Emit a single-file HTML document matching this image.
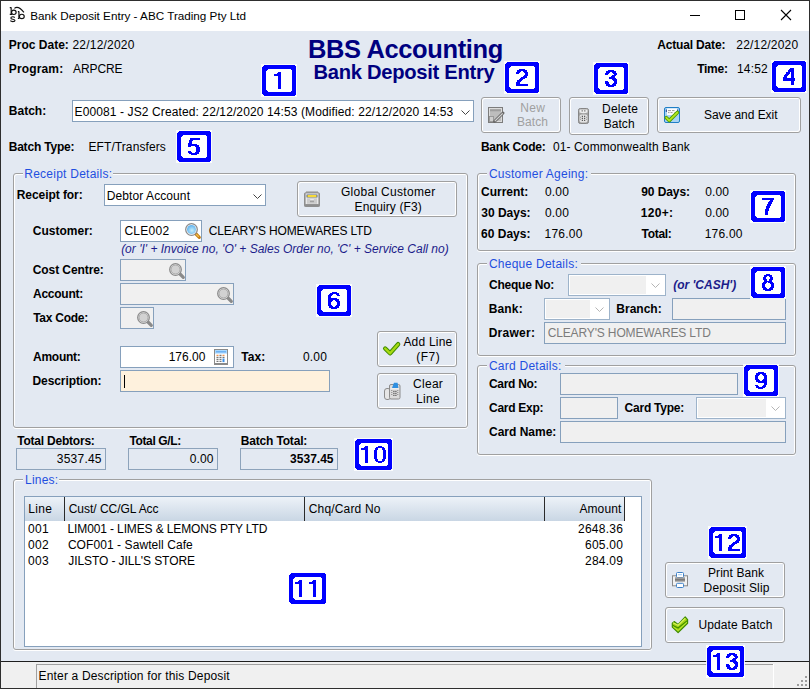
<!DOCTYPE html>
<html><head><meta charset="utf-8">
<style>
*{box-sizing:border-box}
html,body{margin:0;padding:0;width:810px;height:689px;overflow:hidden}
body{position:relative;background:#E3E9F2;font-family:"Liberation Sans",sans-serif;font-size:12px;color:#000}
.a{position:absolute}
.t{position:absolute;white-space:nowrap;line-height:14px;font-size:12px}
.grp{position:absolute;border:1px solid #A0A0A0;border-radius:3px;box-shadow:inset 1px 1px 0 #fff,inset -1px 0 0 #fff,0 1px 0 #fff}
.leg{position:absolute;height:14px;background:#E3E9F2}
.inp{position:absolute;border:1px solid #86A0BC;background:#fff}
.dis{background:#F0F0F0}
.tot{position:absolute;border:1px solid #8DA3BB;background:#E3E9F2}
.btn{position:absolute;border:1px solid #A0A0A0;border-radius:3px;background:#E3E9F2;box-shadow:inset 1px 1px 0 #fff,inset -1px -1px 0 #fff}
.badge{position:absolute;width:34px;height:31px;border:4px solid #0000FF;background:#fff;border-radius:3px;color:#0000FF;font-size:24px;line-height:23px;text-align:center;box-shadow:0 0 0 1px #fff}
.w2{width:37px}
svg{position:absolute;overflow:visible}
</style></head><body>
<div class="a" style="left:0px;top:0px;width:810px;height:31px;background:#fff;"></div>
<div class="t" style="top:9px;left:30.34px;font-size:11.7px;">Bank Deposit Entry - ABC Trading Pty Ltd</div>
<svg style="left:6px;top:4px" width="24" height="22" viewBox="0 0 752 689">
<g fill="none" stroke="#111" stroke-width="36">
<path d="M162 110V330M118 112H170M118 325H200"/>
<ellipse cx="245" cy="262" rx="72" ry="68"/>
<path d="M405 235V458M372 240H412M372 455H420"/>
<ellipse cx="495" cy="388" rx="76" ry="68"/>
<path d="M272 425Q255 398 212 398Q152 398 152 438Q152 470 215 478Q282 486 282 520Q282 552 215 552Q160 552 135 522"/>
</g>
<path d="M262 135Q390 40 562 262" fill="none" stroke="#111" stroke-width="34"/>
</svg>
<div class="a" style="left:690px;top:15px;width:10px;height:1px;background:#000;"></div>
<div class="a" style="left:735px;top:10px;width:10px;height:10px;border:1px solid #000"></div>
<svg style="left:781px;top:10px" width="10" height="10" viewBox="0 0 10 10"><path d="M0 0L10 10M10 0L0 10" stroke="#000" stroke-width="1.1"/></svg>
<div class="t" style="top:38px;left:8.80px;font-weight:bold;">Proc Date:</div>
<div class="t" style="top:38px;left:72.50px;letter-spacing:0.194px;">22/12/2020</div>
<div class="t" style="top:62px;left:8.80px;font-weight:bold;letter-spacing:0.150px;">Program:</div>
<div class="t" style="top:62px;left:73.08px;letter-spacing:-0.100px;">ARPCRE</div>
<div class="t" style="left:308px;top:35px;font-weight:bold;font-size:25.5px;line-height:28px;letter-spacing:-0.385px;color:#000080">BBS Accounting</div>
<div class="t" style="left:313.6px;top:61px;font-weight:bold;font-size:20.2px;line-height:22px;letter-spacing:-0.3px;color:#000080">Bank Deposit Entry</div>
<div class="t" style="top:38px;left:657.20px;font-weight:bold;letter-spacing:-0.160px;">Actual Date:</div>
<div class="t" style="top:38px;left:736.30px;letter-spacing:0.194px;">22/12/2020</div>
<div class="t" style="top:62px;left:697.17px;font-weight:bold;letter-spacing:-0.250px;">Time:</div>
<div class="t" style="top:62px;left:736.99px;letter-spacing:0.194px;">14:52</div>
<div class="t" style="top:104px;left:8.80px;font-weight:bold;">Batch:</div>
<div class="inp" style="left:72px;top:100px;width:402px;height:22px;overflow:hidden"></div>
<div class="a" style="left:73px;top:101px;width:380px;height:20px;overflow:hidden">
<div class="t" style="top:4px;left:1.52px;letter-spacing:0.110px;">E00081 - JS2 Created: 22/12/2020 14:53 (Modified: 22/12/2020 14:53)</div>
</div>
<svg style="left:461px;top:110px" width="9" height="6" viewBox="0 0 9 6"><path d="M0.5 0.5L4.5 4.5L8.5 0.5" fill="none" stroke="#444" stroke-width="1"/></svg>
<div class="btn" style="left:481px;top:97px;width:80px;height:36px;"></div>
<svg style="left:488px;top:107px" width="16" height="16" viewBox="0 0 16 16">
<rect x="0.5" y="0.5" width="14" height="15" fill="#BDBDBD" stroke="#7C7C7C"/>
<rect x="1.5" y="1.5" width="12" height="13" fill="none" stroke="#DCDCDC"/>
<rect x="2" y="2.3" width="11" height="2" fill="#9E9E9E"/>
<rect x="1.5" y="9.5" width="4" height="5" fill="#CFCFCF" stroke="#8E8E8E" stroke-width="0.8"/>
<path d="M6.5 14.5L15 6" stroke="#6A6A6A" stroke-width="3" stroke-linecap="round"/>
<path d="M6.8 14.2L14.7 6.3" stroke="#D6D6D6" stroke-width="1.2"/></svg>
<div class="t" style="top:101px;left:432.70px;width:200px;text-align:center;letter-spacing:0.331px;color:#A0A0A0;">New</div>
<div class="t" style="top:115px;left:432.50px;width:200px;text-align:center;letter-spacing:0.063px;color:#A0A0A0;">Batch</div>
<div class="btn" style="left:569px;top:97px;width:80px;height:38px;"></div>
<svg style="left:578px;top:108px" width="11" height="16" viewBox="0 0 11 16">
<rect x="0.5" y="0.5" width="10" height="15" rx="1.8" fill="#A0A0A0" stroke="#868686"/>
<path d="M1.5 1.5H9.5V4.5Q5.5 6 1.5 4.5Z" fill="#EDEDED"/>
<rect x="1.5" y="6.5" width="8" height="8" rx="2" fill="#E2E2E2"/>
<path d="M3.6 2.9h1.2M6.2 2.9h1.2" stroke="#6A6A6A" stroke-width="1.2"/>
<path d="M3.8 8.3h1.2M6 8.3h1.2M3.8 10.3h1.2M6 10.3h1.2M3.8 12.3h1.2M6 12.3h1.2" stroke="#5A5A5A" stroke-width="1.3"/>
<path d="M2 9.3h1M8 9.3h1M2 11.3h1M8 11.3h1" stroke="#9A9A9A" stroke-width="1"/></svg>
<div class="t" style="top:102px;left:520.10px;width:200px;text-align:center;letter-spacing:0.219px;">Delete</div>
<div class="t" style="top:117px;left:519.20px;width:200px;text-align:center;letter-spacing:0.063px;">Batch</div>
<div class="btn" style="left:657px;top:97px;width:144px;height:36px;"></div>
<svg style="left:664px;top:107px" width="16" height="16" viewBox="0 0 16 16">
<rect x="0.5" y="0.5" width="15" height="15" rx="1.5" fill="#A6D3F5" stroke="#1F7EC6"/>
<rect x="3" y="1.5" width="10" height="6.5" fill="#FDFDFD"/>
<path d="M2.3 2.5v2.5M13.7 2.5v2.5" stroke="#1A3F8A" stroke-width="1"/>
<path d="M4 3.6h3M8 3.6h2.5M4 5.6h1.5M6.5 5.6h2M10.5 5.6h1" stroke="#8A8A8A" stroke-width="0.9"/>
<path d="M2.3 10.7L5.2 13.6L13.4 5.5" fill="none" stroke="#4C9A00" stroke-width="3.6" stroke-linecap="round" stroke-linejoin="round"/>
<path d="M2.3 10.7L5.2 13.6L13.4 5.5" fill="none" stroke="#B4E61E" stroke-width="1.8" stroke-linecap="round" stroke-linejoin="round"/></svg>
<div class="t" style="top:108px;left:704.06px;letter-spacing:-0.050px;">Save and Exit</div>
<div class="t" style="top:140px;left:8.66px;font-weight:bold;letter-spacing:-0.190px;">Batch Type:</div>
<div class="t" style="top:140px;left:88.52px;letter-spacing:0.080px;">EFT/Transfers</div>
<div class="t" style="top:140px;left:480.90px;font-weight:bold;letter-spacing:-0.190px;">Bank Code:</div>
<div class="t" style="top:140px;left:553.03px;letter-spacing:0.100px;">01- Commonwealth Bank</div>
<div class="grp" style="left:13px;top:173px;width:455px;height:255px;"></div>
<div class="a" style="left:23px;top:170px;width:90px;height:8px;background:#E3E9F2;"></div>
<div class="t" style="top:167px;left:24.22px;letter-spacing:0.250px;color:#1F4FE0;">Receipt Details:</div>
<div class="t" style="top:188px;left:16.70px;font-weight:bold;letter-spacing:-0.060px;">Receipt for:</div>
<div class="inp" style="left:104px;top:184px;width:162px;height:22px;"></div>
<div class="t" style="top:189px;left:106.72px;letter-spacing:0.092px;">Debtor Account</div>
<svg style="left:253px;top:194px" width="9" height="6" viewBox="0 0 9 6"><path d="M0.5 0.5L4.5 4.5L8.5 0.5" fill="none" stroke="#444" stroke-width="1"/></svg>
<div class="btn" style="left:297px;top:181px;width:160px;height:36px;"></div>
<svg style="left:304px;top:191px" width="16" height="16" viewBox="0 0 16 16">
<rect x="2" y="0.3" width="12" height="1.6" fill="#A6A6A6"/>
<rect x="0.5" y="1.8" width="15" height="13.7" rx="1" fill="#A8A8A8" stroke="#8E8E8E"/>
<rect x="1.8" y="2.5" width="12.4" height="10.5" fill="#E8E8E8"/>
<rect x="2.6" y="3.6" width="10.8" height="2.8" fill="#3A4E78"/>
<rect x="3.4" y="4" width="9.2" height="2.2" fill="#F6D938"/>
<rect x="3" y="7.3" width="10" height="5.5" fill="#CCCCCC"/>
<rect x="6.2" y="8.3" width="3.6" height="1" fill="#F4F4F4"/>
<rect x="6" y="9.6" width="4" height="1.6" fill="#A2A2A2"/>
<rect x="0.5" y="13.2" width="15" height="2.3" fill="#8E8E8E"/></svg>
<div class="t" style="top:185px;left:288.20px;width:200px;text-align:center;letter-spacing:0.300px;">Global Customer</div>
<div class="t" style="top:200px;left:288.20px;width:200px;text-align:center;letter-spacing:0.100px;">Enquiry (F3)</div>
<div class="t" style="top:224px;left:32.81px;font-weight:bold;">Customer:</div>
<div class="inp" style="left:120px;top:220px;width:82px;height:22px;"></div>
<div class="t" style="top:224px;left:124.39px;letter-spacing:0.272px;">CLE002</div>
<svg style="left:185px;top:223px" width="16" height="16" viewBox="0 0 16 16">
<defs><radialGradient id="lb" cx="0.55" cy="0.6" r="0.6"><stop offset="0" stop-color="#C8F0FC"/><stop offset="1" stop-color="#5EB0EC"/></radialGradient></defs>
<path d="M11 11L14.3 14.3" stroke="#C4801A" stroke-width="3.2" stroke-linecap="round"/>
<path d="M11.6 11.6L13.4 13.4" stroke="#F6C24A" stroke-width="1.3" stroke-linecap="round"/>
<circle cx="6.5" cy="6.5" r="5.8" fill="#fff" stroke="#8C8C8C" stroke-width="1.3"/>
<circle cx="6.5" cy="6.5" r="4.5" fill="url(#lb)"/></svg>
<div class="t" style="top:224px;left:208.79px;letter-spacing:-0.140px;">CLEARY&#x27;S HOMEWARES LTD</div>
<div class="t" style="top:242px;left:121.14px;font-style:italic;color:#1C1C8A;">(or &#x27;I&#x27; + Invoice no, &#x27;O&#x27; + Sales Order no, &#x27;C&#x27; + Service Call no)</div>
<div class="t" style="top:263px;left:32.81px;font-weight:bold;letter-spacing:-0.090px;">Cost Centre:</div>
<div class="inp dis" style="left:120px;top:259px;width:66px;height:22px;"></div>
<svg style="left:169px;top:263px" width="16" height="16" viewBox="0 0 16 16">
<path d="M11 11L14.3 14.3" stroke="#8A8A8A" stroke-width="3.2" stroke-linecap="round"/>
<circle cx="6.5" cy="6.5" r="5.8" fill="#F6F6F6" stroke="#8C8C8C" stroke-width="1.3"/>
<circle cx="6.5" cy="6.5" r="4.5" fill="#D2D2D2" stroke="#9A9A9A" stroke-width="0.8"/></svg>
<div class="t" style="top:287px;left:33.00px;font-weight:bold;letter-spacing:-0.250px;">Account:</div>
<div class="inp dis" style="left:120px;top:283px;width:114px;height:22px;"></div>
<svg style="left:217px;top:287px" width="16" height="16" viewBox="0 0 16 16">
<path d="M11 11L14.3 14.3" stroke="#8A8A8A" stroke-width="3.2" stroke-linecap="round"/>
<circle cx="6.5" cy="6.5" r="5.8" fill="#F6F6F6" stroke="#8C8C8C" stroke-width="1.3"/>
<circle cx="6.5" cy="6.5" r="4.5" fill="#D2D2D2" stroke="#9A9A9A" stroke-width="0.8"/></svg>
<div class="t" style="top:311px;left:33.17px;font-weight:bold;letter-spacing:-0.250px;">Tax Code:</div>
<div class="inp dis" style="left:120px;top:307px;width:34px;height:22px;"></div>
<svg style="left:137px;top:311px" width="16" height="16" viewBox="0 0 16 16">
<path d="M11 11L14.3 14.3" stroke="#8A8A8A" stroke-width="3.2" stroke-linecap="round"/>
<circle cx="6.5" cy="6.5" r="5.8" fill="#F6F6F6" stroke="#8C8C8C" stroke-width="1.3"/>
<circle cx="6.5" cy="6.5" r="4.5" fill="#D2D2D2" stroke="#9A9A9A" stroke-width="0.8"/></svg>
<div class="t" style="top:350px;left:33.00px;font-weight:bold;letter-spacing:-0.250px;">Amount:</div>
<div class="inp" style="left:120px;top:346px;width:114px;height:22px;"></div>
<div class="t" style="top:350px;right:604.52px;letter-spacing:0.020px;">176.00</div>
<svg style="left:214px;top:349px" width="14" height="16" viewBox="0 0 14 16">
<rect x="0.5" y="0.5" width="13" height="15" fill="#FFFFFF" stroke="#8A8A8A"/>
<rect x="0" y="14" width="14" height="2" fill="#8A8A8A"/>
<rect x="1" y="1" width="12" height="3.6" fill="#A9D8FF"/>
<rect x="2" y="2.2" width="10" height="1.2" fill="#5FA8F0"/>
<path d="M2.5 6.3h2M8.5 6.3h2" stroke="#F07820" stroke-width="1"/>
<path d="M5.5 6.3h2M2.5 8.3h2M5.5 8.3h2M8.5 8.3h2M2.5 10.3h2M5.5 10.3h2M2.5 12.3h2M5.5 12.3h2" stroke="#555" stroke-width="1"/>
<rect x="8.5" y="9.5" width="2" height="3.6" fill="#3C8FE8"/></svg>
<div class="t" style="top:350px;left:241.37px;font-weight:bold;">Tax:</div>
<div class="t" style="top:350px;left:303.03px;letter-spacing:0.161px;">0.00</div>
<div class="t" style="top:374px;left:32.50px;font-weight:bold;letter-spacing:-0.090px;">Description:</div>
<div class="inp" style="left:120px;top:370px;width:210px;height:22px;background:#FEF1DD"></div>
<div class="a" style="left:124px;top:375px;width:1px;height:13px;background:#000;"></div>
<div class="btn" style="left:377px;top:331px;width:80px;height:36px;"></div>
<svg style="left:383px;top:341px" width="18" height="14" viewBox="0 0 18 14">
<path d="M2.2 7.5L7.1 12.3L15.1 3.2" fill="none" stroke="#3F8C00" stroke-width="4.4" stroke-linecap="round" stroke-linejoin="round"/>
<path d="M2.2 7.5L7.1 12.3L15.1 3.2" fill="none" stroke="#A8DA12" stroke-width="2.4" stroke-linecap="round" stroke-linejoin="round"/></svg>
<div class="t" style="top:335px;left:327.90px;width:200px;text-align:center;letter-spacing:0.203px;">Add Line</div>
<div class="t" style="top:350px;left:328.20px;width:200px;text-align:center;letter-spacing:0.500px;">(F7)</div>
<div class="btn" style="left:377px;top:373px;width:80px;height:36px;"></div>
<svg style="left:384px;top:382px" width="17" height="18" viewBox="0 0 17 18">
<rect x="0.5" y="6.5" width="6" height="11" rx="2.5" fill="#E6E6E6" stroke="#8C8C8C"/>
<rect x="5.5" y="2.5" width="10.5" height="14.5" rx="1.5" fill="#DCDCDC" stroke="#8C8C8C"/>
<path d="M8 6L10 0.8H13.6L14.4 6Z" fill="#2F8FE0"/>
<rect x="6.5" y="6.3" width="8.5" height="1" fill="#F4F4F4"/>
<path d="M9.3 9.3h1.2M11.3 9.3h1.2M9.3 11.3h1.2M11.3 11.3h1.2M9.3 13.3h1.2M11.3 13.3h1.2" stroke="#555" stroke-width="1.2"/>
<path d="M7.3 8.5h1M13.3 8.5h1M7.3 10.5h1M13.3 10.5h1M7.3 12.5h1M13.3 12.5h1" stroke="#777" stroke-width="0.9"/></svg>
<div class="t" style="top:377px;left:328.10px;width:200px;text-align:center;letter-spacing:0.265px;">Clear</div>
<div class="t" style="top:392px;left:327.90px;width:200px;text-align:center;letter-spacing:0.328px;">Line</div>
<div class="t" style="top:434px;left:17.17px;font-weight:bold;letter-spacing:-0.210px;">Total Debtors:</div>
<div class="tot" style="left:16px;top:448px;width:90px;height:22px;"></div>
<div class="t" style="top:452px;right:708.23px;letter-spacing:0.232px;">3537.45</div>
<div class="t" style="top:434px;left:129.47px;font-weight:bold;letter-spacing:-0.380px;">Total G/L:</div>
<div class="tot" style="left:128px;top:448px;width:90px;height:22px;"></div>
<div class="t" style="top:452px;right:596.36px;letter-spacing:0.161px;">0.00</div>
<div class="t" style="top:434px;left:240.70px;font-weight:bold;letter-spacing:-0.160px;">Batch Total:</div>
<div class="tot" style="left:240px;top:448px;width:98px;height:22px;"></div>
<div class="t" style="top:452px;right:476.50px;font-weight:bold;">3537.45</div>
<div class="grp" style="left:13px;top:479px;width:639px;height:171px;"></div>
<div class="a" style="left:23px;top:476px;width:36px;height:8px;background:#E3E9F2;"></div>
<div class="t" style="top:473px;left:25.02px;letter-spacing:0.200px;color:#1F4FE0;">Lines:</div>
<div class="inp" style="left:24px;top:496px;width:618px;height:151px;"></div>
<div class="a" style="left:25px;top:497px;width:600px;height:24px;background:linear-gradient(#EDF2F8,#C9D6E4);"></div>
<div class="a" style="left:64px;top:497px;width:1px;height:24px;background:#2A2A2A;"></div>
<div class="a" style="left:304px;top:497px;width:1px;height:24px;background:#2A2A2A;"></div>
<div class="a" style="left:544px;top:497px;width:1px;height:24px;background:#2A2A2A;"></div>
<div class="a" style="left:624px;top:497px;width:1px;height:24px;background:#2A2A2A;"></div>
<div class="t" style="top:502px;left:28.32px;letter-spacing:0.328px;">Line</div>
<div class="t" style="top:502px;left:68.69px;letter-spacing:-0.024px;">Cust/ CC/GL Acc</div>
<div class="t" style="top:502px;left:308.69px;letter-spacing:0.179px;">Chq/Card No</div>
<div class="t" style="top:502px;right:188.61px;letter-spacing:0.107px;">Amount</div>
<div class="t" style="top:522px;left:28.03px;letter-spacing:0.326px;">001</div>
<div class="t" style="top:522px;left:67.52px;letter-spacing:-0.125px;">LIM001 - LIMES &amp; LEMONS PTY LTD</div>
<div class="t" style="top:522px;right:186.93px;letter-spacing:0.232px;">2648.36</div>
<div class="t" style="top:538px;left:28.03px;letter-spacing:0.326px;">002</div>
<div class="t" style="top:538px;left:67.89px;letter-spacing:0.077px;">COF001 - Sawtell Cafe</div>
<div class="t" style="top:538px;right:186.92px;letter-spacing:0.216px;">605.00</div>
<div class="t" style="top:554px;left:28.03px;letter-spacing:0.326px;">003</div>
<div class="t" style="top:554px;left:68.31px;letter-spacing:-0.095px;">JILSTO - JILL&#x27;S STORE</div>
<div class="t" style="top:554px;right:186.92px;letter-spacing:0.216px;">284.09</div>
<div class="grp" style="left:477px;top:173px;width:319px;height:78px;"></div>
<div class="a" style="left:487px;top:170px;width:104px;height:8px;background:#E3E9F2;"></div>
<div class="t" style="top:167px;left:488.89px;letter-spacing:0.250px;color:#1F4FE0;">Customer Ageing:</div>
<div class="t" style="top:185px;left:481.01px;font-weight:bold;">Current:</div>
<div class="t" style="top:185px;left:545.03px;letter-spacing:0.161px;">0.00</div>
<div class="t" style="top:185px;left:641.18px;font-weight:bold;letter-spacing:-0.070px;">90 Days:</div>
<div class="t" style="top:185px;left:705.13px;letter-spacing:0.161px;">0.00</div>
<div class="t" style="top:206px;left:481.22px;font-weight:bold;">30 Days:</div>
<div class="t" style="top:206px;left:545.03px;letter-spacing:0.161px;">0.00</div>
<div class="t" style="top:206px;left:640.84px;font-weight:bold;letter-spacing:0.300px;">120+:</div>
<div class="t" style="top:206px;left:705.13px;letter-spacing:0.161px;">0.00</div>
<div class="t" style="top:227px;left:481.06px;font-weight:bold;">60 Days:</div>
<div class="t" style="top:227px;left:544.59px;letter-spacing:0.216px;">176.00</div>
<div class="t" style="top:227px;left:641.47px;font-weight:bold;letter-spacing:-0.280px;">Total:</div>
<div class="t" style="top:227px;left:704.69px;letter-spacing:0.216px;">176.00</div>
<div class="grp" style="left:477px;top:263px;width:319px;height:93px;"></div>
<div class="a" style="left:487px;top:260px;width:94px;height:8px;background:#E3E9F2;"></div>
<div class="t" style="top:257px;left:488.89px;letter-spacing:0.250px;color:#1F4FE0;">Cheque Details:</div>
<div class="t" style="top:278px;left:489.01px;font-weight:bold;letter-spacing:-0.230px;">Cheque No:</div>
<div class="inp dis" style="left:568px;top:274px;width:98px;height:22px;border-color:#9DB3CA;box-shadow:inset 0 0 0 1px #fff"></div>
<div class="a" style="left:646px;top:276px;width:18px;height:18px;background:#fff;"></div>
<svg style="left:651px;top:283px" width="9" height="6" viewBox="0 0 9 6"><path d="M0.5 0.5L4.5 4.5L8.5 0.5" fill="none" stroke="#B5B5B5" stroke-width="1"/></svg>
<div class="t" style="top:278px;left:673.17px;font-weight:bold;font-style:italic;color:#1C1C8A;">(or &#x27;CASH&#x27;)</div>
<div class="t" style="top:302px;left:488.70px;font-weight:bold;letter-spacing:0.150px;">Bank:</div>
<div class="inp dis" style="left:544px;top:298px;width:66px;height:22px;border-color:#9DB3CA;box-shadow:inset 0 0 0 1px #fff"></div>
<div class="a" style="left:590px;top:300px;width:18px;height:18px;background:#fff;"></div>
<svg style="left:595px;top:307px" width="9" height="6" viewBox="0 0 9 6"><path d="M0.5 0.5L4.5 4.5L8.5 0.5" fill="none" stroke="#B5B5B5" stroke-width="1"/></svg>
<div class="t" style="top:302px;left:616.30px;font-weight:bold;">Branch:</div>
<div class="inp dis" style="left:672px;top:298px;width:114px;height:22px;"></div>
<div class="t" style="top:326px;left:488.70px;font-weight:bold;letter-spacing:0.270px;">Drawer:</div>
<div class="inp dis" style="left:544px;top:322px;width:242px;height:22px;"></div>
<div class="t" style="top:326px;left:547.69px;letter-spacing:-0.140px;color:#7C7C7C;">CLEARY&#x27;S HOMEWARES LTD</div>
<div class="grp" style="left:477px;top:365px;width:319px;height:90px;"></div>
<div class="a" style="left:487px;top:362px;width:78px;height:8px;background:#E3E9F2;"></div>
<div class="t" style="top:359px;left:488.89px;letter-spacing:0.250px;color:#1F4FE0;">Card Details:</div>
<div class="t" style="top:377px;left:489.01px;font-weight:bold;letter-spacing:-0.300px;">Card No:</div>
<div class="inp dis" style="left:560px;top:373px;width:178px;height:22px;"></div>
<div class="t" style="top:401px;left:489.01px;font-weight:bold;letter-spacing:-0.260px;">Card Exp:</div>
<div class="inp dis" style="left:560px;top:397px;width:58px;height:22px;"></div>
<div class="t" style="top:401px;left:624.61px;font-weight:bold;letter-spacing:-0.240px;">Card Type:</div>
<div class="inp dis" style="left:696px;top:397px;width:90px;height:22px;border-color:#9DB3CA;box-shadow:inset 0 0 0 1px #fff"></div>
<div class="a" style="left:766px;top:399px;width:18px;height:18px;background:#fff;"></div>
<svg style="left:771px;top:406px" width="9" height="6" viewBox="0 0 9 6"><path d="M0.5 0.5L4.5 4.5L8.5 0.5" fill="none" stroke="#B5B5B5" stroke-width="1"/></svg>
<div class="t" style="top:425px;left:489.01px;font-weight:bold;">Card Name:</div>
<div class="inp dis" style="left:560px;top:421px;width:226px;height:22px;"></div>
<div class="btn" style="left:665px;top:562px;width:120px;height:36px;"></div>
<svg style="left:672px;top:572px" width="16" height="16" viewBox="0 0 16 16">
<rect x="0.5" y="3.8" width="15" height="10" fill="#F2F2F2" stroke="#8A8A8A"/>
<rect x="4.5" y="0.5" width="7" height="5" rx="1" fill="#fff" stroke="#3C80C8"/>
<rect x="6" y="2.2" width="4" height="1" fill="#9CCAF5"/>
<rect x="3" y="5.3" width="10" height="4.4" fill="#9C9C9C"/>
<rect x="3" y="7.2" width="10" height="1.2" fill="#707070"/>
<rect x="4.5" y="11.3" width="7" height="4.2" rx="1" fill="#fff" stroke="#3C80C8"/></svg>
<div class="t" style="top:566px;left:636.00px;width:200px;text-align:center;letter-spacing:0.064px;">Print Bank</div>
<div class="t" style="top:581px;left:636.60px;width:200px;text-align:center;letter-spacing:0.164px;">Deposit Slip</div>
<div class="btn" style="left:665px;top:607px;width:120px;height:36px;"></div>
<svg style="left:668px;top:612px" width="24" height="24" viewBox="0 0 24 24">
<path d="M4.3 11.2L6.2 9.6L10.1 12.4L17.2 5L19.6 7.6V11.2L10.1 20.6L4.3 15Z" fill="#A4D612" stroke="#3F8C00" stroke-width="1.2" stroke-linejoin="round"/>
<path d="M5 10.8L10.1 13.3L17.3 6.2" fill="none" stroke="#D6F05A" stroke-width="1.2"/>
<path d="M4.6 13.2L10.1 16L19.2 8.6" fill="none" stroke="#3F8C00" stroke-width="1.1"/>
<path d="M5.2 14.8L10.1 18.6L18.8 10.4" fill="none" stroke="#B8E830" stroke-width="1"/></svg>
<div class="t" style="top:618px;left:698.47px;letter-spacing:0.107px;">Update Batch</div>
<div class="a" style="left:1px;top:661px;width:808px;height:27px;background:#F0F0F0;"></div>
<div class="a" style="left:1px;top:661px;width:808px;height:1px;background:#1E1E1E;"></div>
<div class="a" style="left:36px;top:664px;width:737px;height:1px;background:#A0A0A0;"></div>
<div class="a" style="left:36px;top:664px;width:1px;height:24px;background:#A0A0A0;"></div>
<div class="a" style="left:773px;top:664px;width:1px;height:24px;background:#FFFFFF;"></div>
<div class="t" style="top:669px;left:38.62px;letter-spacing:0.160px;">Enter a Description for this Deposit</div>
<div class="a" style="left:805px;top:676px;width:2px;height:2px;background:#9C9C9C;"></div>
<div class="a" style="left:801px;top:680px;width:2px;height:2px;background:#9C9C9C;"></div>
<div class="a" style="left:805px;top:680px;width:2px;height:2px;background:#9C9C9C;"></div>
<div class="a" style="left:797px;top:684px;width:2px;height:2px;background:#9C9C9C;"></div>
<div class="a" style="left:801px;top:684px;width:2px;height:2px;background:#9C9C9C;"></div>
<div class="a" style="left:805px;top:684px;width:2px;height:2px;background:#9C9C9C;"></div>
<div class="a" style="left:0px;top:0px;width:810px;height:1px;background:#2E2E2E;"></div>
<div class="a" style="left:0px;top:0px;width:1px;height:689px;background:#2E2E2E;"></div>
<div class="a" style="left:809px;top:0px;width:1px;height:689px;background:#2E2E2E;"></div>
<div class="a" style="left:0px;top:688px;width:810px;height:1px;background:#2E2E2E;"></div>
<svg style="left:261px;top:64px" width="36" height="33" viewBox="-1 -1 36 33" shape-rendering="crispEdges"><rect x="-1" y="-1" width="36" height="33" fill="#fff" opacity="0.85"/><path d="M2 0H32L34 2V29L32 31H2L0 29V2Z" fill="#0000FF"/><path d="M6 4H28L30 6V25L28 27H6L4 25V6Z" fill="#fff"/><path d="M16 7h3v1h-3zM15 8h4v1h-4zM12 9h7v1h-7zM12 10h7v1h-7zM16 11h3v1h-3zM16 12h3v1h-3zM16 13h3v1h-3zM16 14h3v1h-3zM16 15h3v1h-3zM16 16h3v1h-3zM16 17h3v1h-3zM16 18h3v1h-3zM16 19h3v1h-3zM16 20h3v1h-3zM16 21h3v1h-3zM16 22h3v1h-3zM16 23h3v1h-3z" fill="#0000FF"/></svg>
<svg style="left:504px;top:61px" width="36" height="33" viewBox="-1 -1 36 33" shape-rendering="crispEdges"><rect x="-1" y="-1" width="36" height="33" fill="#fff" opacity="0.85"/><path d="M2 0H32L34 2V29L32 31H2L0 29V2Z" fill="#0000FF"/><path d="M6 4H28L30 6V25L28 27H6L4 25V6Z" fill="#fff"/><path d="M14 7h6v1h-6zM12 8h10v1h-10zM12 9h4v1h-4zM18 9h4v1h-4zM11 10h4v1h-4zM19 10h4v1h-4zM11 11h3v1h-3zM20 11h3v1h-3zM20 12h3v1h-3zM19 13h4v1h-4zM18 14h4v1h-4zM16 15h6v1h-6zM15 16h5v1h-5zM14 17h4v1h-4zM12 18h5v1h-5zM12 19h4v1h-4zM11 20h4v1h-4zM11 21h4v1h-4zM11 22h12v1h-12zM11 23h12v1h-12z" fill="#0000FF"/></svg>
<svg style="left:593px;top:62px" width="36" height="33" viewBox="-1 -1 36 33" shape-rendering="crispEdges"><rect x="-1" y="-1" width="36" height="33" fill="#fff" opacity="0.85"/><path d="M2 0H32L34 2V29L32 31H2L0 29V2Z" fill="#0000FF"/><path d="M6 4H28L30 6V25L28 27H6L4 25V6Z" fill="#fff"/><path d="M14 7h6v1h-6zM12 8h10v1h-10zM12 9h4v1h-4zM18 9h4v1h-4zM11 10h4v1h-4zM19 10h4v1h-4zM11 11h3v1h-3zM20 11h3v1h-3zM18 12h4v1h-4zM17 13h4v1h-4zM15 14h6v1h-6zM15 15h7v1h-7zM18 16h5v1h-5zM19 17h4v1h-4zM11 18h3v1h-3zM20 18h3v1h-3zM11 19h4v1h-4zM20 19h3v1h-3zM11 20h4v1h-4zM19 20h4v1h-4zM12 21h4v1h-4zM18 21h4v1h-4zM12 22h10v1h-10zM14 23h6v1h-6z" fill="#0000FF"/></svg>
<svg style="left:771px;top:60px" width="36" height="33" viewBox="-1 -1 36 33" shape-rendering="crispEdges"><rect x="-1" y="-1" width="36" height="33" fill="#fff" opacity="0.85"/><path d="M2 0H32L34 2V29L32 31H2L0 29V2Z" fill="#0000FF"/><path d="M6 4H28L30 6V25L28 27H6L4 25V6Z" fill="#fff"/><path d="M18 7h4v1h-4zM17 8h5v1h-5zM16 9h6v1h-6zM16 10h6v1h-6zM14 11h4v1h-4zM19 11h3v1h-3zM14 12h4v1h-4zM19 12h3v1h-3zM13 13h4v1h-4zM19 13h3v1h-3zM12 14h4v1h-4zM19 14h3v1h-3zM12 15h3v1h-3zM19 15h3v1h-3zM11 16h4v1h-4zM19 16h3v1h-3zM11 17h12v1h-12zM11 18h12v1h-12zM11 19h12v1h-12zM19 20h3v1h-3zM19 21h3v1h-3zM19 22h3v1h-3zM19 23h3v1h-3z" fill="#0000FF"/></svg>
<svg style="left:176px;top:130px" width="36" height="33" viewBox="-1 -1 36 33" shape-rendering="crispEdges"><rect x="-1" y="-1" width="36" height="33" fill="#fff" opacity="0.85"/><path d="M2 0H32L34 2V29L32 31H2L0 29V2Z" fill="#0000FF"/><path d="M6 4H28L30 6V25L28 27H6L4 25V6Z" fill="#fff"/><path d="M13 7h10v1h-10zM13 8h10v1h-10zM12 9h4v1h-4zM12 10h3v1h-3zM12 11h3v1h-3zM11 12h4v1h-4zM11 13h9v1h-9zM11 14h11v1h-11zM11 15h3v1h-3zM18 15h4v1h-4zM19 16h4v1h-4zM19 17h4v1h-4zM19 18h4v1h-4zM19 19h4v1h-4zM11 20h3v1h-3zM19 20h4v1h-4zM11 21h4v1h-4zM18 21h4v1h-4zM12 22h10v1h-10zM14 23h6v1h-6z" fill="#0000FF"/></svg>
<svg style="left:316px;top:284px" width="36" height="33" viewBox="-1 -1 36 33" shape-rendering="crispEdges"><rect x="-1" y="-1" width="36" height="33" fill="#fff" opacity="0.85"/><path d="M2 0H32L34 2V29L32 31H2L0 29V2Z" fill="#0000FF"/><path d="M6 4H28L30 6V25L28 27H6L4 25V6Z" fill="#fff"/><path d="M15 7h5v1h-5zM13 8h9v1h-9zM12 9h4v1h-4zM19 9h3v1h-3zM11 10h4v1h-4zM20 10h3v1h-3zM11 11h3v1h-3zM11 12h3v1h-3zM11 13h9v1h-9zM11 14h11v1h-11zM11 15h5v1h-5zM18 15h4v1h-4zM11 16h4v1h-4zM19 16h4v1h-4zM11 17h3v1h-3zM20 17h3v1h-3zM11 18h3v1h-3zM20 18h3v1h-3zM11 19h3v1h-3zM20 19h3v1h-3zM11 20h4v1h-4zM19 20h4v1h-4zM12 21h4v1h-4zM18 21h4v1h-4zM12 22h10v1h-10zM14 23h6v1h-6z" fill="#0000FF"/></svg>
<svg style="left:750px;top:190px" width="36" height="33" viewBox="-1 -1 36 33" shape-rendering="crispEdges"><rect x="-1" y="-1" width="36" height="33" fill="#fff" opacity="0.85"/><path d="M2 0H32L34 2V29L32 31H2L0 29V2Z" fill="#0000FF"/><path d="M6 4H28L30 6V25L28 27H6L4 25V6Z" fill="#fff"/><path d="M11 7h12v1h-12zM11 8h12v1h-12zM19 9h3v1h-3zM18 10h4v1h-4zM17 11h4v1h-4zM17 12h4v1h-4zM16 13h4v1h-4zM16 14h4v1h-4zM15 15h4v1h-4zM15 16h4v1h-4zM15 17h3v1h-3zM14 18h4v1h-4zM14 19h4v1h-4zM14 20h3v1h-3zM14 21h3v1h-3zM14 22h3v1h-3zM14 23h3v1h-3z" fill="#0000FF"/></svg>
<svg style="left:750px;top:266px" width="36" height="33" viewBox="-1 -1 36 33" shape-rendering="crispEdges"><rect x="-1" y="-1" width="36" height="33" fill="#fff" opacity="0.85"/><path d="M2 0H32L34 2V29L32 31H2L0 29V2Z" fill="#0000FF"/><path d="M6 4H28L30 6V25L28 27H6L4 25V6Z" fill="#fff"/><path d="M15 7h4v1h-4zM13 8h8v1h-8zM13 9h3v1h-3zM18 9h3v1h-3zM12 10h3v1h-3zM19 10h3v1h-3zM12 11h3v1h-3zM19 11h3v1h-3zM12 12h4v1h-4zM18 12h4v1h-4zM13 13h3v1h-3zM18 13h3v1h-3zM13 14h8v1h-8zM12 15h4v1h-4zM17 15h5v1h-5zM11 16h4v1h-4zM19 16h4v1h-4zM11 17h3v1h-3zM20 17h3v1h-3zM11 18h3v1h-3zM20 18h3v1h-3zM11 19h3v1h-3zM20 19h3v1h-3zM11 20h4v1h-4zM19 20h4v1h-4zM12 21h4v1h-4zM18 21h4v1h-4zM12 22h10v1h-10zM14 23h6v1h-6z" fill="#0000FF"/></svg>
<svg style="left:743px;top:364px" width="36" height="33" viewBox="-1 -1 36 33" shape-rendering="crispEdges"><rect x="-1" y="-1" width="36" height="33" fill="#fff" opacity="0.85"/><path d="M2 0H32L34 2V29L32 31H2L0 29V2Z" fill="#0000FF"/><path d="M6 4H28L30 6V25L28 27H6L4 25V6Z" fill="#fff"/><path d="M14 7h6v1h-6zM12 8h10v1h-10zM12 9h4v1h-4zM18 9h4v1h-4zM11 10h4v1h-4zM19 10h4v1h-4zM11 11h3v1h-3zM20 11h3v1h-3zM11 12h3v1h-3zM20 12h3v1h-3zM11 13h3v1h-3zM20 13h3v1h-3zM11 14h4v1h-4zM19 14h4v1h-4zM12 15h4v1h-4zM18 15h5v1h-5zM12 16h11v1h-11zM14 17h9v1h-9zM20 18h3v1h-3zM20 19h3v1h-3zM11 20h3v1h-3zM19 20h3v1h-3zM12 21h3v1h-3zM18 21h4v1h-4zM12 22h9v1h-9zM14 23h5v1h-5z" fill="#0000FF"/></svg>
<svg style="left:354px;top:438px" width="39" height="33" viewBox="-1 -1 39 33" shape-rendering="crispEdges"><rect x="-1" y="-1" width="39" height="33" fill="#fff" opacity="0.85"/><path d="M2 0H35L37 2V29L35 31H2L0 29V2Z" fill="#0000FF"/><path d="M6 4H31L33 6V25L31 27H6L4 25V6Z" fill="#fff"/><path d="M10 7h3v1h-3zM9 8h4v1h-4zM6 9h7v1h-7zM6 10h7v1h-7zM10 11h3v1h-3zM10 12h3v1h-3zM10 13h3v1h-3zM10 14h3v1h-3zM10 15h3v1h-3zM10 16h3v1h-3zM10 17h3v1h-3zM10 18h3v1h-3zM10 19h3v1h-3zM10 20h3v1h-3zM10 21h3v1h-3zM10 22h3v1h-3zM10 23h3v1h-3zM23 7h4v1h-4zM21 8h8v1h-8zM20 9h3v1h-3zM27 9h3v1h-3zM20 10h3v1h-3zM27 10h3v1h-3zM19 11h3v1h-3zM28 11h3v1h-3zM19 12h3v1h-3zM28 12h3v1h-3zM19 13h3v1h-3zM28 13h3v1h-3zM19 14h3v1h-3zM28 14h3v1h-3zM19 15h3v1h-3zM28 15h3v1h-3zM19 16h3v1h-3zM28 16h3v1h-3zM19 17h3v1h-3zM28 17h3v1h-3zM19 18h3v1h-3zM28 18h3v1h-3zM19 19h3v1h-3zM28 19h3v1h-3zM20 20h3v1h-3zM27 20h3v1h-3zM20 21h3v1h-3zM27 21h3v1h-3zM21 22h8v1h-8zM23 23h4v1h-4z" fill="#0000FF"/></svg>
<svg style="left:288px;top:572px" width="39" height="33" viewBox="-1 -1 39 33" shape-rendering="crispEdges"><rect x="-1" y="-1" width="39" height="33" fill="#fff" opacity="0.85"/><path d="M2 0H35L37 2V29L35 31H2L0 29V2Z" fill="#0000FF"/><path d="M6 4H31L33 6V25L31 27H6L4 25V6Z" fill="#fff"/><path d="M10 7h3v1h-3zM9 8h4v1h-4zM6 9h7v1h-7zM6 10h7v1h-7zM10 11h3v1h-3zM10 12h3v1h-3zM10 13h3v1h-3zM10 14h3v1h-3zM10 15h3v1h-3zM10 16h3v1h-3zM10 17h3v1h-3zM10 18h3v1h-3zM10 19h3v1h-3zM10 20h3v1h-3zM10 21h3v1h-3zM10 22h3v1h-3zM10 23h3v1h-3zM24 7h3v1h-3zM23 8h4v1h-4zM20 9h7v1h-7zM20 10h7v1h-7zM24 11h3v1h-3zM24 12h3v1h-3zM24 13h3v1h-3zM24 14h3v1h-3zM24 15h3v1h-3zM24 16h3v1h-3zM24 17h3v1h-3zM24 18h3v1h-3zM24 19h3v1h-3zM24 20h3v1h-3zM24 21h3v1h-3zM24 22h3v1h-3zM24 23h3v1h-3z" fill="#0000FF"/></svg>
<svg style="left:708px;top:526px" width="39" height="33" viewBox="-1 -1 39 33" shape-rendering="crispEdges"><rect x="-1" y="-1" width="39" height="33" fill="#fff" opacity="0.85"/><path d="M2 0H35L37 2V29L35 31H2L0 29V2Z" fill="#0000FF"/><path d="M6 4H31L33 6V25L31 27H6L4 25V6Z" fill="#fff"/><path d="M10 7h3v1h-3zM9 8h4v1h-4zM6 9h7v1h-7zM6 10h7v1h-7zM10 11h3v1h-3zM10 12h3v1h-3zM10 13h3v1h-3zM10 14h3v1h-3zM10 15h3v1h-3zM10 16h3v1h-3zM10 17h3v1h-3zM10 18h3v1h-3zM10 19h3v1h-3zM10 20h3v1h-3zM10 21h3v1h-3zM10 22h3v1h-3zM10 23h3v1h-3zM22 7h6v1h-6zM20 8h10v1h-10zM20 9h4v1h-4zM26 9h4v1h-4zM19 10h4v1h-4zM27 10h4v1h-4zM19 11h3v1h-3zM28 11h3v1h-3zM28 12h3v1h-3zM27 13h4v1h-4zM26 14h4v1h-4zM24 15h6v1h-6zM23 16h5v1h-5zM22 17h4v1h-4zM20 18h5v1h-5zM20 19h4v1h-4zM19 20h4v1h-4zM19 21h4v1h-4zM19 22h12v1h-12zM19 23h12v1h-12z" fill="#0000FF"/></svg>
<svg style="left:706px;top:645px" width="39" height="33" viewBox="-1 -1 39 33" shape-rendering="crispEdges"><rect x="-1" y="-1" width="39" height="33" fill="#fff" opacity="0.85"/><path d="M2 0H35L37 2V29L35 31H2L0 29V2Z" fill="#0000FF"/><path d="M6 4H31L33 6V25L31 27H6L4 25V6Z" fill="#fff"/><path d="M10 7h3v1h-3zM9 8h4v1h-4zM6 9h7v1h-7zM6 10h7v1h-7zM10 11h3v1h-3zM10 12h3v1h-3zM10 13h3v1h-3zM10 14h3v1h-3zM10 15h3v1h-3zM10 16h3v1h-3zM10 17h3v1h-3zM10 18h3v1h-3zM10 19h3v1h-3zM10 20h3v1h-3zM10 21h3v1h-3zM10 22h3v1h-3zM10 23h3v1h-3zM22 7h6v1h-6zM20 8h10v1h-10zM20 9h4v1h-4zM26 9h4v1h-4zM19 10h4v1h-4zM27 10h4v1h-4zM19 11h3v1h-3zM28 11h3v1h-3zM26 12h4v1h-4zM25 13h4v1h-4zM23 14h6v1h-6zM23 15h7v1h-7zM26 16h5v1h-5zM27 17h4v1h-4zM19 18h3v1h-3zM28 18h3v1h-3zM19 19h4v1h-4zM28 19h3v1h-3zM19 20h4v1h-4zM27 20h4v1h-4zM20 21h4v1h-4zM26 21h4v1h-4zM20 22h10v1h-10zM22 23h6v1h-6z" fill="#0000FF"/></svg>
</body></html>
